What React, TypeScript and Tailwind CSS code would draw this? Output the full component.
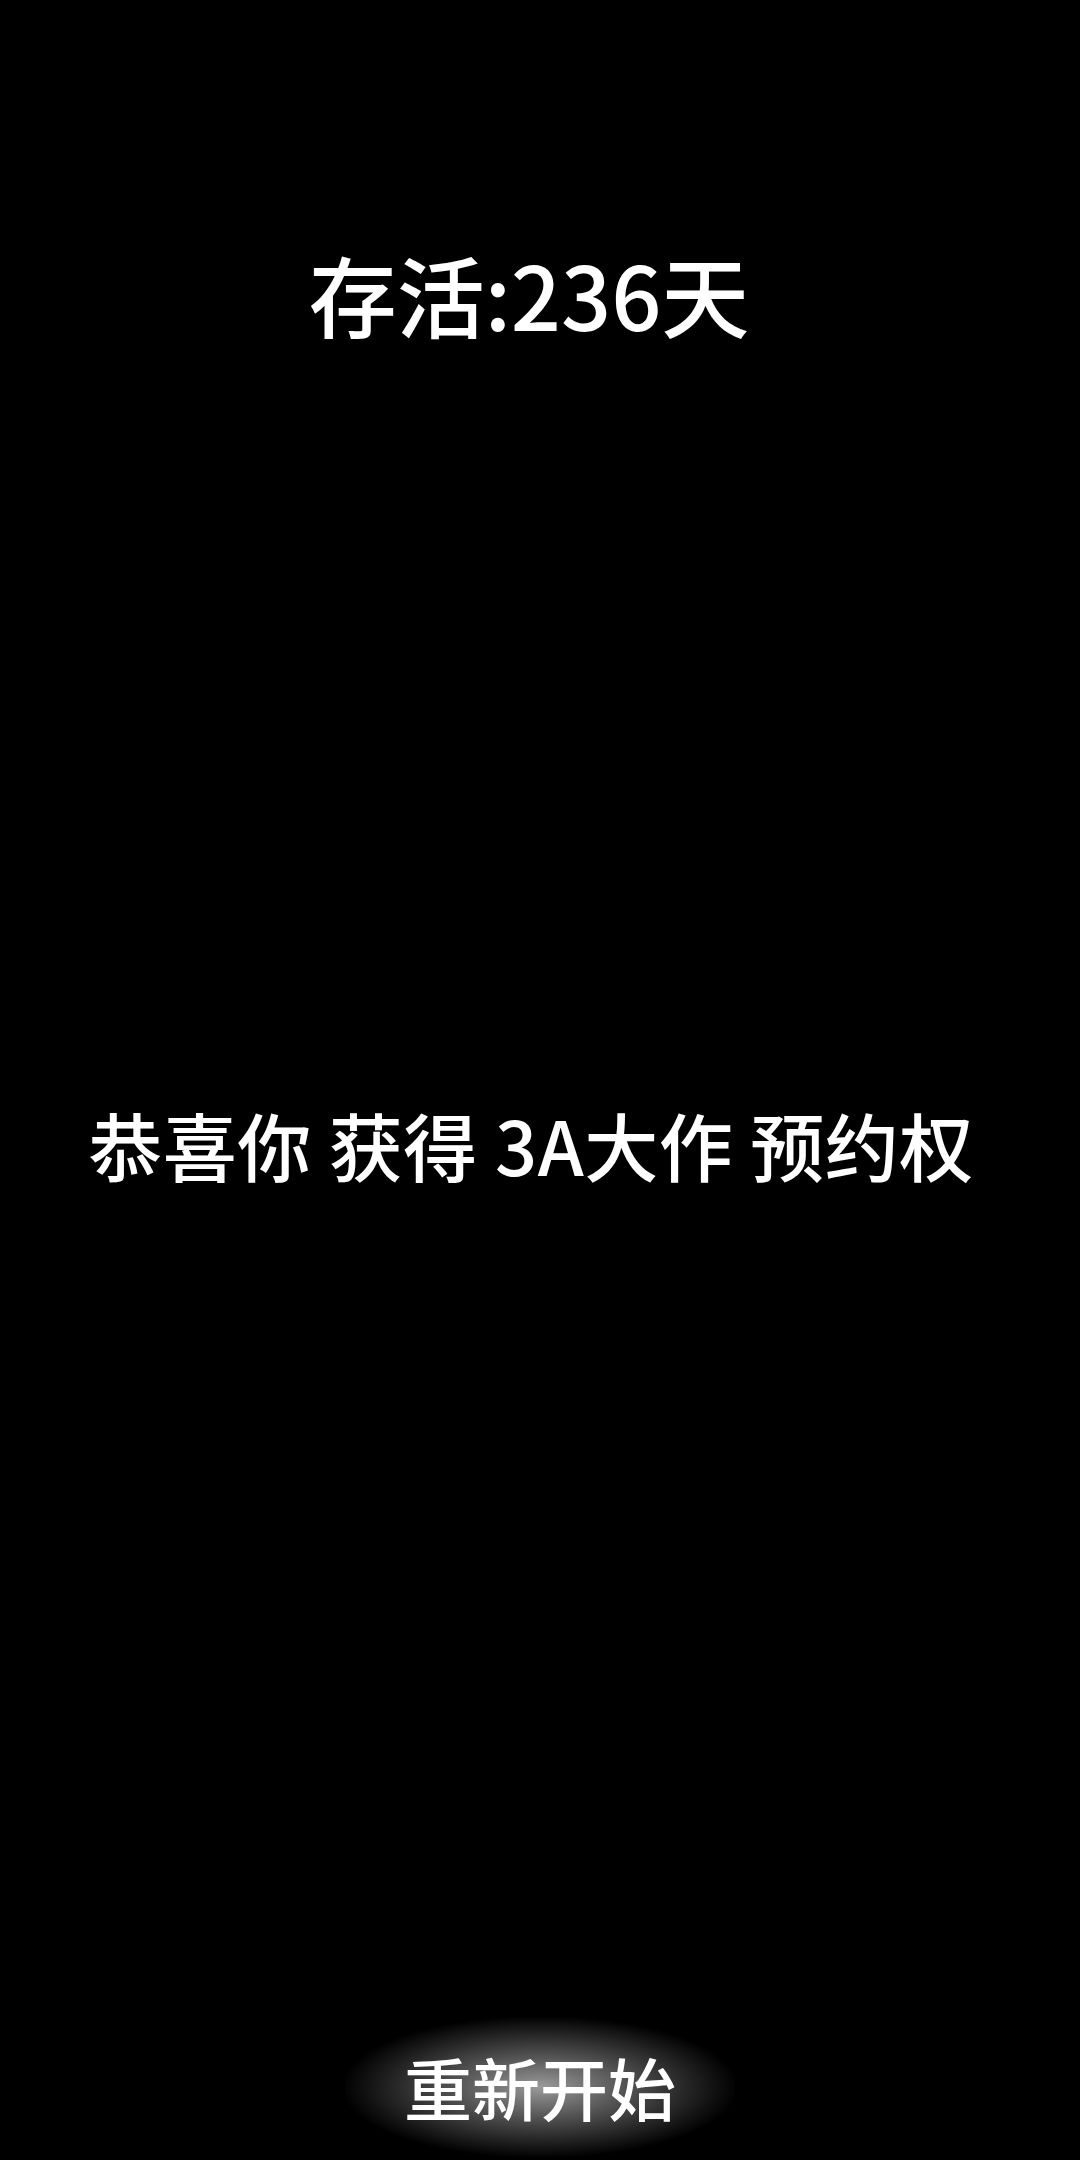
import React from 'react';

const cjk = { fontFamily: '"Noto Sans CJK SC", "Noto Sans", sans-serif' };

const App = () => {
  return (
    <div className="flex h-[2160px] w-full flex-col items-center bg-black text-white" style={cjk}>
      {/* Survival days */}
      <h1 className="mt-[249px] pr-[22px] text-[88px] font-medium leading-[88px]">存活:236天</h1>

      {/* Reward message */}
      <p className="mt-[770px] whitespace-pre pr-[18px] text-[74px] font-medium leading-[74px] tracking-[0.5px]">
        恭喜你 获得 3A大作 预约权
      </p>

      {/* Restart button */}
      <button className="mt-[836px] flex h-[140px] w-[390px] cursor-pointer items-center justify-center bg-[radial-gradient(ellipse_at_center,#9a9a9a_0%,#555555_30%,#202020_56%,#000000_72%)] text-[68px] font-medium leading-[68px] text-white">
        重新开始
      </button>
    </div>
  );
};

export default App;
